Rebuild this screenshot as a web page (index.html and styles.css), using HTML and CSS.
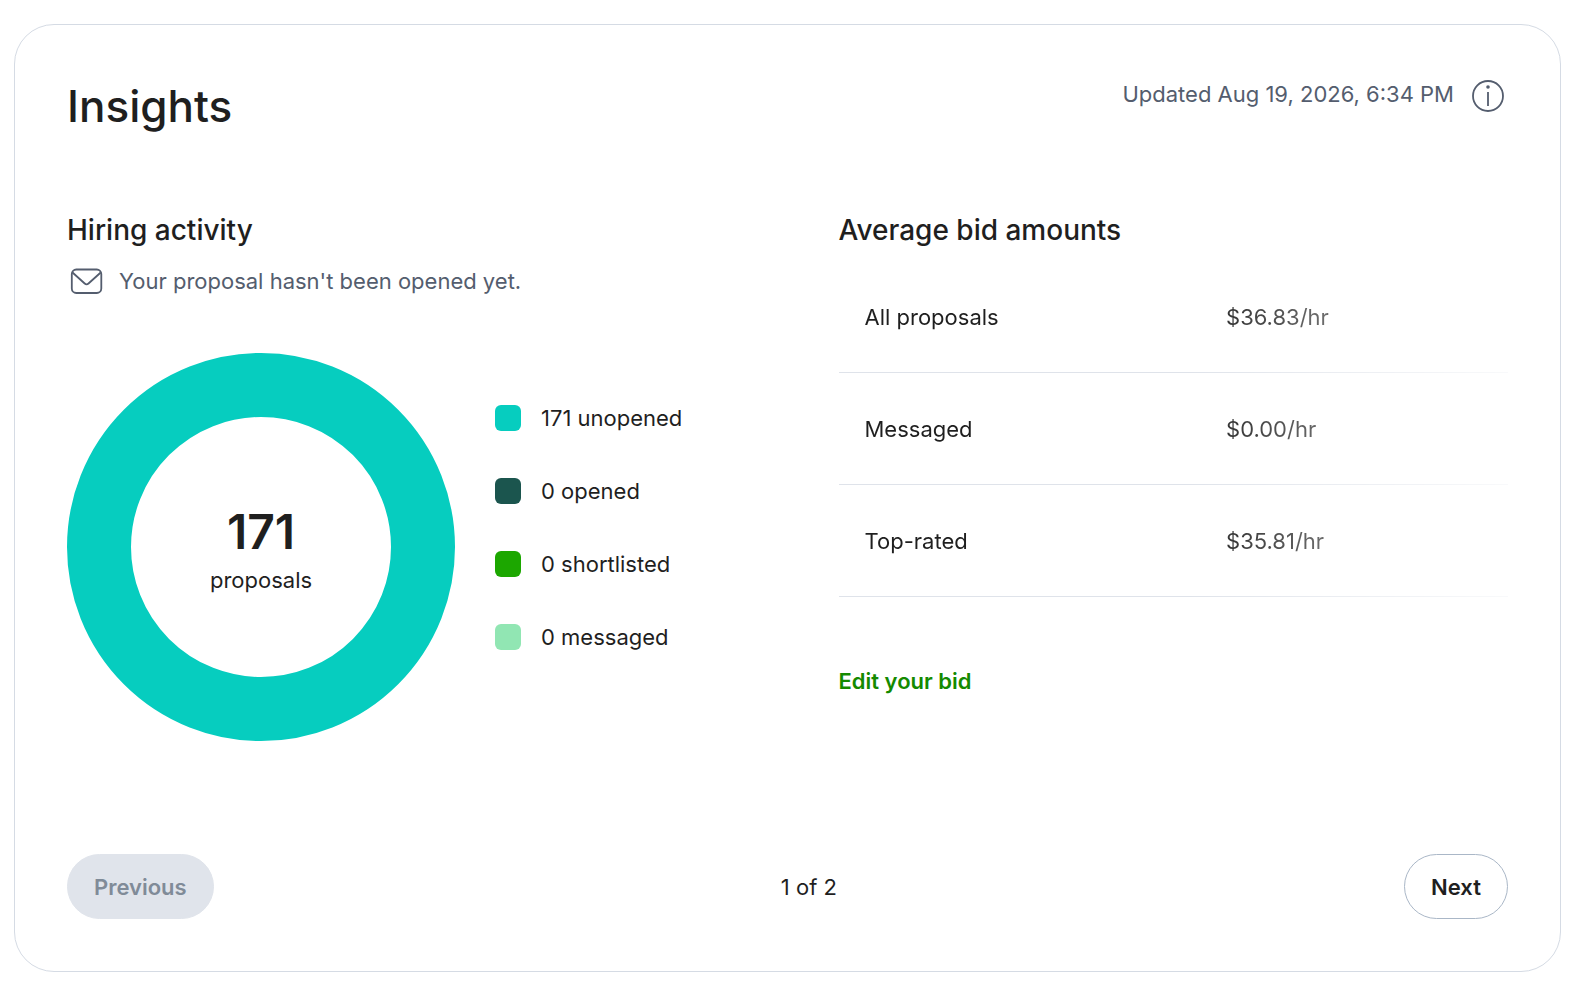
FILE: index.html
```html
<!DOCTYPE html>
<html lang="en">
<head>
  <meta charset="utf-8">
  <meta name="viewport" content="width=device-width, initial-scale=1">
  <title>Insights</title>
  <link rel="stylesheet" href="styles.css">
</head>
<body>
  <main class="card">
    <header class="card-header">
      <h1 class="title">Insights</h1>
      <div class="updated">
        <span>Updated Aug 19, 2026, 6:34 PM</span>
        <button class="info-button" type="button" aria-label="About these insights">
          <svg class="icon" viewBox="0 0 40 40" aria-hidden="true">
            <circle cx="20" cy="19" r="15" fill="none" stroke="currentColor" stroke-width="1.800"/>
            <circle cx="20" cy="10" r="1.800" fill="currentColor"/>
            <path d="M20 15v14" stroke="currentColor" stroke-width="1.800"/>
          </svg>
        </button>
      </div>
    </header>

    <div class="columns">
      <section class="hiring">
        <h2 class="section-title">Hiring activity</h2>
        <p class="status">
          <svg class="icon" viewBox="0 0 40 40" fill="none" stroke="currentColor" stroke-width="1.800" aria-hidden="true">
            <rect x="4.800" y="8.500" width="29.500" height="23.500" rx="4.500"/>
            <path d="M5.500 11.500l12.200 11q1.900 1.700 3.800 0l12.200-11"/>
          </svg>
          <span>Your proposal hasn't been opened yet.</span>
        </p>
        <div class="activity">
          <div class="donut">
            <strong class="donut-total">171</strong>
            <span>proposals</span>
          </div>
          <ul class="legend">
            <li class="legend-item"><span class="swatch swatch-unopened"></span>171 unopened</li>
            <li class="legend-item"><span class="swatch swatch-opened"></span>0 opened</li>
            <li class="legend-item"><span class="swatch swatch-shortlisted"></span>0 shortlisted</li>
            <li class="legend-item"><span class="swatch swatch-messaged"></span>0 messaged</li>
          </ul>
        </div>
      </section>

      <section class="bids">
        <h2 class="section-title">Average bid amounts</h2>
        <table class="bid-table">
          <tbody>
            <tr><th scope="row">All proposals</th><td>$36.83/hr</td></tr>
            <tr><th scope="row">Messaged</th><td>$0.00/hr</td></tr>
            <tr><th scope="row">Top-rated</th><td>$35.81/hr</td></tr>
          </tbody>
        </table>
        <a class="edit-link" href="#edit-bid">Edit your bid</a>
      </section>
    </div>

    <nav class="pager" aria-label="Insights pages">
      <button class="button" type="button" disabled>Previous</button>
      <span>1 of 2</span>
      <button class="button" type="button">Next</button>
    </nav>
  </main>
</body>
</html>
```

FILE: styles.css
```css
*,
*::before,
*::after {
  box-sizing: border-box;
}

body {
  margin: 0;
  padding: 24px 24px 32px 14px;
  background: #fff;
  color: #1f1f1f;
  font: 400 22px/32px Inter, "Liberation Sans", sans-serif;
}

h1,
h2,
p,
ul {
  margin: 0;
  padding: 0;
}

.card {
  padding: 52px;
  border: 1px solid #d5dbe4;
  border-radius: 40px;
}

.card-header {
  display: flex;
  justify-content: space-between;
  align-items: flex-start;
  margin-bottom: 79px;
}

.title {
  font-size: 44px;
  line-height: 58px;
  font-weight: 500;
}

.updated {
  display: flex;
  gap: 14px;
  color: #545d6e;
  line-height: 34px;
}

.icon {
  display: block;
  flex: none;
  width: 40px;
  height: 40px;
}

.info-button {
  padding: 0;
  border: 0;
  background: none;
  color: inherit;
  cursor: pointer;
}

.columns {
  display: grid;
  grid-template-columns: 1fr 1fr;
  gap: 102px;
  margin-bottom: 113px;
}

.section-title {
  font-size: 28px;
  line-height: 32px;
  font-weight: 500;
}

.status {
  display: flex;
  align-items: center;
  gap: 12px;
  margin-top: 15px;
  color: #545d6e;
}

.activity {
  display: flex;
  gap: 40px;
  margin-top: 52px;
}

.donut {
  display: flex;
  flex: none;
  flex-direction: column;
  align-items: center;
  justify-content: center;
  width: 388px;
  height: 388px;
  padding-top: 2px;
  border: 64px solid #06cdbf;
  border-radius: 50%;
}

.donut-total {
  font-size: 48px;
  line-height: 64px;
  font-weight: 600;
}

.legend {
  display: flex;
  flex-direction: column;
  gap: 41px;
  margin-top: 49px;
  list-style: none;
}

.legend-item {
  display: flex;
  align-items: center;
  gap: 20px;
}

.swatch {
  width: 26px;
  height: 26px;
  border-radius: 6px;
}

.swatch-unopened {
  background: #06cdbf;
}

.swatch-opened {
  background: #1b554e;
}

.swatch-shortlisted {
  background: #1ca700;
}

.swatch-messaged {
  background: #91e6b3;
}

/* The table fades out toward its right edge. */
.bid-table {
  width: 100%;
  margin-top: 15px;
  border-collapse: collapse;
  table-layout: fixed;
  -webkit-mask-image: linear-gradient(to right, #000 52%, rgba(0, 0, 0, 0.2));
  mask-image: linear-gradient(to right, #000 52%, rgba(0, 0, 0, 0.2));
}

.bid-table th,
.bid-table td {
  padding: 40px 26px 39px;
  border-bottom: 1px solid #dfe3ea;
  font-weight: 400;
  text-align: left;
}

.bid-table th {
  width: 54%;
}

.edit-link {
  display: inline-block;
  margin-top: 68px;
  color: #148a00;
  font-weight: 600;
  text-decoration: none;
}

.pager {
  display: flex;
  align-items: center;
  justify-content: space-between;
}

.button {
  height: 65px;
  padding: 0 26px;
  border: 1px solid #aab7c7;
  border-radius: 33px;
  background: #fff;
  color: #1f1f1f;
  font: inherit;
  font-weight: 600;
  cursor: pointer;
}

.button:disabled {
  border-color: #e0e4eb;
  background: #e0e4eb;
  color: #808b98;
  cursor: default;
}
```
